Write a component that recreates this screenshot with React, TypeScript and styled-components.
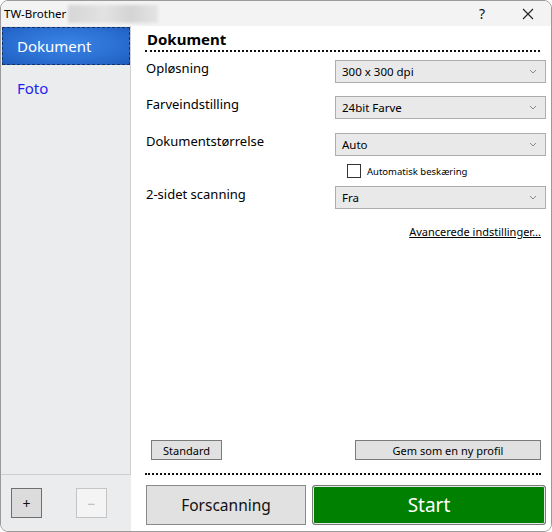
import React from "react";
import styled, { createGlobalStyle } from "styled-components";

const Global = createGlobalStyle`
  html, body { margin: 0; padding: 0; background: #ffffff; }
  * { box-sizing: border-box; }
  body { font-family: "Noto Sans", "Open Sans", sans-serif; color: #000; }
`;

const Window = styled.div`
  width: 552px;
  height: 532px;
  border: 1px solid #9a9a9a;
  border-radius: 8px;
  overflow: hidden;
  display: flex;
  flex-direction: column;
  background: #f3f3f3;
`;

const TitleBar = styled.div`
  height: 25px;
  flex: none;
  display: flex;
  align-items: center;
  padding-left: 3px;
  font-size: 11.5px;
  background: #f3f3f3;
`;

const Blur = styled.span`
  display: inline-block;
  width: 90px;
  height: 18px;
  margin-left: 2px;
  background: linear-gradient(90deg, #d6d6d6, #e2e2e2 40%, #d4d4d4 70%, #e4e4e4);
  filter: blur(1.5px);
`;

const TitleSpacer = styled.div`
  flex: 1;
`;

const TitleBtn = styled.div`
  width: 46px;
  height: 25px;
  display: flex;
  align-items: center;
  justify-content: center;
  font-size: 14px;
  color: #111;
`;

const Body = styled.div`
  flex: 1;
  display: flex;
  min-height: 0;
`;

const Sidebar = styled.div`
  width: 130px;
  flex: none;
  display: flex;
  flex-direction: column;
  background: #ebecee;
`;

const NavList = styled.div`
  flex: 1;
  border-right: 1px solid #cfcfcf;
  border-bottom: 1px solid #cfcfcf;
  padding: 1px 0 0 1px;
  display: flex;
  flex-direction: column;
`;

const NavItem = styled.div<{ $active?: boolean }>`
  height: 38px;
  display: flex;
  align-items: center;
  padding-left: 14px;
  font-size: 15px;
  ${(p) =>
    p.$active
      ? `
    color: #ffffff;
    background: radial-gradient(ellipse at 50% 45%, #3a85e6 0%, #2b6fd2 60%, #1f5cbf 100%);
    border: 1px dashed #17325e;
  `
      : `
    color: #1e1ef0;
    border: 1px solid transparent;
    margin-top: 4px;
  `}
`;

const SideFooter = styled.div`
  height: 56px;
  flex: none;
  display: flex;
  align-items: center;
  padding-left: 10px;
  gap: 34px;
`;

const SquareBtn = styled.div<{ $disabled?: boolean }>`
  width: 31px;
  height: 30px;
  display: flex;
  align-items: center;
  justify-content: center;
  font-size: 14px;
  background: ${(p) => (p.$disabled ? "#f4f4f4" : "#dcdcdc")};
  border: 1px solid ${(p) => (p.$disabled ? "#c4c4c4" : "#6f6f6f")};
  color: ${(p) => (p.$disabled ? "#b8b8b8" : "#111")};
`;

const Main = styled.div`
  flex: 1;
  background: #ffffff;
  display: flex;
  flex-direction: column;
  padding: 0 5px 6px 12px;
`;

const Heading = styled.div`
  margin: 3px 6px 0 2px;
  font-size: 15px;
  font-weight: 700;
  line-height: 20px;
  padding-left: 2px;
  padding-bottom: 1px;
  border-bottom: 2px dotted #111;
`;

const Row = styled.div<{ $top: number }>`
  display: flex;
  align-items: center;
  margin-top: ${(p) => p.$top}px;
  padding-left: 3px;
`;

const Label = styled.div`
  flex: 1;
  font-size: 13px;
  margin-top: -7px;
`;

const Select = styled.div`
  width: 211px;
  height: 23px;
  border: 1px solid #adadad;
  background: #e9e9e9;
  display: flex;
  align-items: center;
  padding: 0 8px 0 6px;
  font-size: 11.5px;
  justify-content: space-between;
`;

const CheckRow = styled.div`
  display: flex;
  align-items: center;
  gap: 6px;
  margin: 8px 0 0 204px;
  font-size: 9.5px;
`;

const Box = styled.div`
  width: 14px;
  height: 14px;
  border: 1px solid #333;
  background: #fff;
`;

const LinkRow = styled.div`
  display: flex;
  justify-content: flex-end;
  margin: 15px 5px 0 0;
`;

const Link = styled.span`
  font-size: 11px;
  text-decoration: underline;
  color: #000;
`;

const Spacer = styled.div`
  flex: 1;
`;

const ProfileRow = styled.div`
  display: flex;
  justify-content: space-between;
  padding: 0 5px 0 8px;
`;

const SmallBtn = styled.div<{ $w: number }>`
  width: ${(p) => p.$w}px;
  height: 20px;
  display: flex;
  align-items: center;
  justify-content: center;
  font-size: 11px;
  background: #e1e1e1;
  border: 1px solid #7a7a7a;
`;

const Divider = styled.div`
  margin: 13px 5px 0 2px;
  border-bottom: 2px dotted #111;
`;

const ActionRow = styled.div`
  display: flex;
  gap: 6px;
  margin-top: 10px;
  padding-left: 3px;
`;

const BigBtn = styled.div<{ $primary?: boolean }>`
  height: 40px;
  display: flex;
  align-items: center;
  justify-content: center;
  ${(p) =>
    p.$primary
      ? `
    flex: 1;
    background: #008000;
    color: #fff;
    font-size: 19px;
    border: 1px solid #7a7a7a;
    border-radius: 3px;
    box-shadow: inset 0 0 0 1px #e8e8e8;
  `
      : `
    width: 160px;
    background: #e1e1e1;
    color: #111;
    font-size: 15.5px;
    border: 1px solid #8a8a8a;
  `}
`;

const Chevron = () => (
  <svg width="8" height="6" viewBox="0 0 8 6">
    <polyline points="1,1 4,4 7,1" fill="none" stroke="#8a8a8a" strokeWidth="1" />
  </svg>
);

const rows: { label: string; value: string; top: number }[] = [
  { label: "Opløsning", value: "300 x 300 dpi", top: 8 },
  { label: "Farveindstilling", value: "24bit Farve", top: 13 },
  { label: "Dokumentstørrelse", value: "Auto", top: 14 },
];

export default function App() {
  return (
    <>
      <Global />
      <Window>
        <TitleBar>
          TW-Brother
          <Blur />
          <TitleSpacer />
          <TitleBtn>?</TitleBtn>
          <TitleBtn>
            <svg width="12" height="12" viewBox="0 0 12 12">
              <path d="M1 1 L11 11 M11 1 L1 11" stroke="#222" strokeWidth="1.1" />
            </svg>
          </TitleBtn>
        </TitleBar>
        <Body>
          <Sidebar>
            <NavList>
              <NavItem $active>Dokument</NavItem>
              <NavItem>Foto</NavItem>
            </NavList>
            <SideFooter>
              <SquareBtn>+</SquareBtn>
              <SquareBtn $disabled>−</SquareBtn>
            </SideFooter>
          </Sidebar>
          <Main>
            <Heading>Dokument</Heading>
            {rows.map((r) => (
              <Row key={r.label} $top={r.top}>
                <Label>{r.label}</Label>
                <Select>
                  <span>{r.value}</span>
                  <Chevron />
                </Select>
              </Row>
            ))}
            <CheckRow>
              <Box />
              <span>Automatisk beskæring</span>
            </CheckRow>
            <Row $top={8}>
              <Label>2-sidet scanning</Label>
              <Select>
                <span>Fra</span>
                <Chevron />
              </Select>
            </Row>
            <LinkRow>
              <Link>Avancerede indstillinger...</Link>
            </LinkRow>
            <Spacer />
            <ProfileRow>
              <SmallBtn $w={71}>Standard</SmallBtn>
              <SmallBtn $w={186}>Gem som en ny profil</SmallBtn>
            </ProfileRow>
            <Divider />
            <ActionRow>
              <BigBtn>Forscanning</BigBtn>
              <BigBtn $primary>Start</BigBtn>
            </ActionRow>
          </Main>
        </Body>
      </Window>
    </>
  );
}
